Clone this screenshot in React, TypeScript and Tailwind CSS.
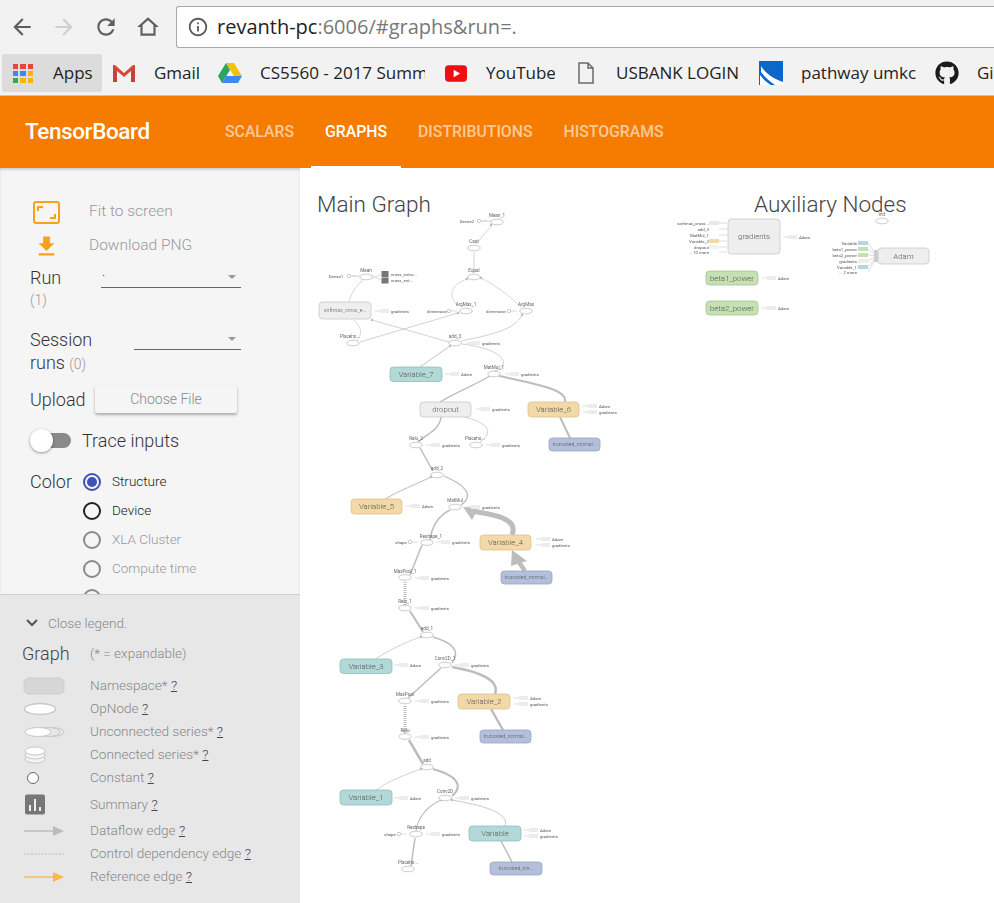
import React from "react";
import { FaGithub } from "react-icons/fa";

const rects: [string, number, number, number, number, string][] = [
  ["softmax_cross_e...", 319, 302, 52, 17, "g"],
  ["Variable_7", 390, 367, 52, 14.5, "t"],
  ["dropout", 420, 402, 51, 15, "g"],
  ["Variable_6", 528, 402, 51, 15, "o"],
  ["truncated_normal...", 549, 438, 51, 13, "b"],
  ["Variable_5", 351, 499, 51, 15, "o"],
  ["Variable_4", 480, 535, 51, 15, "o"],
  ["truncated_normal...", 501, 571, 51, 13, "b"],
  ["Variable_3", 340, 659, 52, 14.5, "t"],
  ["Variable_2", 458, 694, 52, 15, "o"],
  ["truncated_normal...", 480, 730, 51, 13, "b"],
  ["Variable_1", 340, 790, 52, 15, "t"],
  ["Variable", 469, 826, 52, 15, "t"],
  ["truncated_nor...", 490, 862, 52, 13, "b"],
  ["gradients", 728, 219, 52, 35, "g"],
  ["beta1_power", 706, 271, 52, 14, "n"],
  ["beta2_power", 706, 301, 52, 14, "n"],
  ["Adam", 878, 248, 51, 16, "g"],
];
const styles: Record<string, [string, string]> = {
  g: ["#eeeeee", "#c8c8c8"],
  t: ["#b2d8d8", "#93bcbc"],
  o: ["#f3d9a8", "#dcc08c"],
  b: ["#b4bfdb", "#95a3c4"],
  n: ["#c5e0b3", "#a3c48f"],
};
const ellipses: [string, number, number, number?][] = [
  ["Mean_1", 497, 222], ["Cast", 474, 248], ["Equal", 474, 277], ["Mean", 366, 277],
  ["ArgMax_1", 466, 311], ["ArgMax", 526, 311], ["Placeho...", 353, 343, 350], ["add_3", 455, 343],
  ["MatMul_1", 494, 374], ["Relu_2", 416, 445], ["Placeho...", 476, 445, 475], ["add_2", 437, 475],
  ["MatMul", 455, 507], ["Reshape_1", 427, 542.5, 431], ["MaxPool_1", 405, 577.5], ["Relu_1", 405, 608],
  ["add_1", 427, 635], ["Conv2D_1", 445, 665], ["MaxPool", 405, 701], ["Relu", 405, 736.5],
  ["add", 427, 767], ["Conv2D", 445, 798], ["Reshape", 416, 834], ["Placeho...", 408, 869],
  ["init", 882, 221],
];
const stubs: [number, number, string][] = [
  [380, 311, "gradients"], [471, 343, "gradients"], [450, 374, "Adam"], [510, 374, "gradients"],
  [481, 409, "gradients"], [588, 406, "Adam"], [588, 412, "gradients"], [431, 445, "gradients"],
  [491, 445, "gradients"], [411, 506, "Adam"], [471, 507, "gradients"], [441, 542, "gradients"],
  [541, 539, "Adam"], [541, 545, "gradients"], [420, 578, "gradients"], [420, 608, "gradients"],
  [399, 665, "Adam"], [460, 665, "gradients"], [519, 698, "Adam"], [519, 704, "gradients"],
  [420, 701, "gradients"], [420, 737, "gradients"], [399, 798, "Adam"], [460, 798, "gradients"],
  [431, 834, "gradients"], [529, 830, "Adam"], [529, 836, "gradients"], [788, 237, "Adam"],
  [767, 278, "Adam"], [767, 308, "Adam"],
];
const consts: [string, number, number, number][] = [
  ["Dense2", 467, 479, 221], ["Dense1", 336, 349, 276], ["dimension", 437, 449, 311], ["dimension", 496, 509, 311],
  ["shape", 401, 410, 542], ["shape", 390, 399, 834],
];
const edges: [string, number, string?][] = [
  ["M482 221L491 221", 0.6], ["M476 244L492 225", 0.6], ["M474 273L474 252", 0.7],
  ["M458 306C448 296 450 285 467 279", 0.6], ["M522 308C510 296 495 285 481 278", 0.6],
  ["M349 302C352 290 358 285 363 280", 0.6], ["M352 276L360 276", 0.6], ["M372 275L381 280", 0.5], ["M372 279L381 274", 0.5],
  ["M357 340C365 330 358 325 354 320", 0.6], ["M360 342L458 313", 0.7], ["M449 342L372 320", 0.7],
  ["M461 341C490 335 515 330 522 315", 0.7], ["M420 367L450 346", 0.9], ["M494 371C510 368 510 350 462 344", 0.7],
  ["M440 402C460 390 475 385 490 376", 1.3], ["M565 402C568 390 540 385 499 376", 2],
  ["M570 438L560 417", 2], ["M418 442C425 435 440 430 441 417", 1.5], ["M480 442C490 435 495 425 465 417", 0.7],
  ["M433 471L420 448", 1.5], ["M385 499C400 490 415 485 431 477", 1], ["M461 505C475 495 465 485 444 476", 1.3],
  ["M430 540C432 525 440 515 450 510", 1.4], ["M512 535C518 520 500 515 470 511", 5], ["M525 571L516 558", 4.5],
  ["M410 575L422 545", 1.5], ["M423 632L410 611", 2], ["M375 659C390 650 405 642 421 637", 0.7],
  ["M452 663C462 650 450 642 433 637", 1.6], ["M408 698L441 668", 1.5], ["M495 694C500 680 480 672 452 667", 2.5],
  ["M503 730L491 709", 2.5], ["M423 764L409 740", 2.5], ["M376 790C390 780 405 775 421 769", 0.7],
  ["M452 796C465 785 455 775 433 769", 2], ["M416 831C418 815 430 805 441 800", 1.1],
  ["M505 826C510 812 480 805 452 800", 0.8], ["M512 862L501 841", 1.5], ["M411 866L415 838", 1.5],
  ["M405 605L405 581", 3, "1 1"], ["M405 733L405 705", 3, "1 1"],
];
const heads: [number, number, number][] = [
  [491, 225, 2.5], [467, 279, 2.5], [481, 278, 2.5], [458, 313, 2.5], [522, 315, 2.5],
  [450, 346, 2.5], [431, 477, 2.5], [421, 637, 2.5], [421, 769, 2.5], [441, 800, 2.5], [452, 800, 2.5], [372, 320, 2.5],
];
const gradIn: [string, number, string][] = [
  ["softmax_cross...", 223, "#e8e8e8"], ["add_3", 229, "#fff"], ["MatMul_1", 235, "#fff"],
  ["Variable_2", 241, "#f3d9a8"], ["dropout", 247, "#eef3f3"], ["... 10 more", 252, "#fff"],
];
const adamIn: [string, number, string][] = [
  ["Variable", 243, "#b2d8d8"], ["beta1_power", 249, "#c5e0b3"], ["beta2_power", 255, "#c5e0b3"],
  ["gradients", 261, "#eeeeee"], ["Variable_1", 267, "#b2d8d8"], ["... 2 more", 272, "#fff"],
];

function Graph() {
  return (
    <svg className="absolute inset-0 w-[694px] h-[735px] blur-[0.3px]" viewBox="300 168 694 735" fontFamily="Roboto, sans-serif">
      <g fill="none" stroke="#bdbdbd">
        {edges.map(([d, w, dash], i) => (
          <path key={i} d={d} strokeWidth={w} strokeDasharray={dash} />
        ))}
      </g>
      {heads.map(([x, y, s], i) => (
        <circle key={i} cx={x} cy={y} r={s / 2} fill="#bdbdbd" />
      ))}
      <path d="M463 507L478 508L472 520Z M512 550L511 566L527 561Z" fill="#bdbdbd" />
      {rects.map(([t, x, y, w, h, c], i) => (
        <g key={i}>
          <rect x={x} y={y} width={w} height={h} rx={3.5} fill={styles[c][0]} stroke={styles[c][1]} strokeWidth={0.8} />
          <text
            x={x + w / 2}
            y={y + h / 2 + (t.length > 12 ? 1.8 : 2.6)}
            textAnchor="middle"
            fontSize={t.length > 12 ? 5.2 : 7.8}
            fontWeight={300}
            fill="#555"
          >
            {t}
          </text>
        </g>
      ))}
      {ellipses.map(([t, x, y, lx], i) => (
        <g key={i}>
          <ellipse cx={x} cy={y} rx={6.3} ry={2.8} fill="#fff" stroke="#aaa" strokeWidth={0.6} />
          <text x={lx ?? x} y={y - 5} textAnchor="middle" fontSize={4.6} fill="#666">
            {t}
          </text>
        </g>
      ))}
      {stubs.map(([x, y, t], i) => (
        <g key={i}>
          <path d={`M${x - 5} ${y}H${x}`} stroke="#bbb" strokeWidth={0.5} />
          <rect x={x} y={y - 2} width={9} height={4} fill="#ececec" />
          <text x={x + 11} y={y + 1.5} fontSize={4.3} fill="#555">
            {t}
          </text>
        </g>
      ))}
      {consts.map(([t, lx, cx, y], i) => (
        <g key={i}>
          <text x={lx} y={y + 1.5} textAnchor="middle" fontSize={4.3} fill="#555">
            {t}
          </text>
          <circle cx={cx} cy={y} r={1.7} fill="#fff" stroke="#999" strokeWidth={0.5} />
          <path d={`M${cx + 2} ${y}H${cx + 8}`} stroke="#bbb" strokeWidth={0.5} />
        </g>
      ))}
      <rect x={381.5} y={271} width={7} height={6} fill="#777" />
      <rect x={381.5} y={277.5} width={7} height={6} fill="#777" />
      <text x={391} y={275.5} fontSize={4.3} fill="#555">cross_entro...</text>
      <text x={391} y={281.5} fontSize={4.3} fill="#555">cross_ent...</text>
      {gradIn.map(([t, y, c], i) => (
        <g key={i}>
          <text x={709} y={y + 1.5} textAnchor="end" fontSize={4.3} fill="#555">{t}</text>
          <rect x={709} y={y - 2} width={10} height={4} fill={c} />
          <path d={`M719 ${y}L727 ${y}`} stroke="#bbb" strokeWidth={0.5} />
        </g>
      ))}
      {adamIn.map(([t, y, c], i) => (
        <g key={i}>
          <text x={857} y={y + 1.5} textAnchor="end" fontSize={4.3} fill="#555">{t}</text>
          <rect x={858} y={y - 2} width={10} height={4} fill={c} />
          <path d={`M868 ${y}L875 ${253 + i * 1.3}`} stroke="#bbb" strokeWidth={0.5} />
        </g>
      ))}
      <rect x={874} y={250} width={4} height={12} fill="#ccc" />
    </svg>
  );
}

function Nav({ d, c }: { d: string; c: string }) {
  return (
    <svg viewBox="0 0 24 24" className="w-[26px] h-[26px]" fill={c}>
      <path d={d} />
    </svg>
  );
}

function Bookmark({ icon, label, w }: { icon: React.ReactNode; label: string; w: string }) {
  return (
    <div className="flex items-center gap-[18px] shrink-0">
      <div className="w-6 h-6 flex items-center justify-center shrink-0">{icon}</div>
      <span className={`${w} overflow-hidden whitespace-nowrap`}>{label}</span>
    </div>
  );
}

function BrowserChrome() {
  const apps = ["#e8453c", "#e8453c", "#e8453c", "#4285f4", "#4285f4", "#f4b400", "#34a853", "#f4b400", "#f4b400"];
  return (
    <div className="bg-[#f2f2f2] h-[96px] border-b border-[#c4c4c4] overflow-hidden [font-family:'Open_Sans',sans-serif] text-[#222]">
      <div className="h-[48px] flex items-center pt-[6px]">
        <div className="w-[176px] flex items-center shrink-0 pl-[9px] gap-[16px]">
          <Nav c="#5f5f5f" d="M20 11H7.83l5.59-5.59L12 4l-8 8 8 8 1.41-1.41L7.83 13H20v-2z" />
          <Nav c="#cfcfcf" d="M12 4l-1.41 1.41L16.17 11H4v2h12.17l-5.58 5.59L12 20l8-8z" />
          <Nav c="#5f5f5f" d="M17.65 6.35C16.2 4.9 14.21 4 12 4c-4.42 0-7.99 3.58-7.99 8s3.57 8 7.99 8c3.73 0 6.84-2.55 7.73-6h-2.08c-.82 2.33-3.04 4-5.65 4-3.31 0-6-2.69-6-6s2.69-6 6-6c1.66 0 3.14.69 4.22 1.78L13 11h7V4l-2.35 2.35z" />
          <Nav c="#5f5f5f" d="M12 3L2 12h3v8h14v-8h3L12 3zm0 2.7l5 4.5V18H7v-7.8l5-4.5z" />
        </div>
        <div className="flex-1 h-[42px] bg-white border border-[#a8a8a8] border-r-0 rounded-l-[3px] flex items-center pl-[10px] gap-[8px] text-[20px]">
          <svg viewBox="0 0 24 24" className="w-[22px] h-[22px]" fill="#5a5a5a">
            <path d="M11 7h2v2h-2zm0 4h2v6h-2zm1-9C6.48 2 2 6.48 2 12s4.48 10 10 10 10-4.48 10-10S17.52 2 12 2zm0 18c-4.41 0-8-3.59-8-8s3.59-8 8-8 8 3.59 8 8-3.59 8-8 8z" />
          </svg>
          <span className="whitespace-nowrap">
            revanth-pc<span className="text-[#777]">:6006/#graphs&amp;run=.</span>
          </span>
        </div>
      </div>
      <div className="h-[47px] flex items-center pl-[2px] pt-[3px] text-[17px]">
        <div className="w-[100px] h-[38px] bg-[#dcdcdc] rounded-[2px] flex items-center gap-[20px] pl-[11px] mr-[10px] shrink-0">
          <div className="grid grid-cols-3 gap-[2px] w-[20px]">
            {apps.map((c, i) => (
              <div key={i} className="h-[5px]" style={{ backgroundColor: c }} />
            ))}
          </div>
          <span>Apps</span>
        </div>
        <div className="flex items-center gap-[19px]">
          <Bookmark
            label="Gmail"
            w="w-[45px]"
            icon={
              <svg viewBox="0 0 24 20" className="w-6 h-5">
                <path d="M1 2v17h4V8l7 6 7-6v11h4V2h-2l-9 8-9-8z" fill="#d9483b" />
                <path d="M5 8v11H1V3zM19 8v11h4V3z" fill="#c5443a" />
              </svg>
            }
          />
          <Bookmark
            label="CS5560 - 2017 Summ"
            w="w-[165px]"
            icon={
              <svg viewBox="0 0 24 22" className="w-6 h-[22px]">
                <path d="M8 1h8l8 13h-8z" fill="#f4c20d" />
                <path d="M8 1L0 14l4 7 8-13z" fill="#2da562" />
                <path d="M4 21h16l4-7H8z" fill="#4285f4" />
              </svg>
            }
          />
          <Bookmark
            label="YouTube"
            w="w-[69px]"
            icon={
              <svg viewBox="0 0 24 18" className="w-[22px] h-[17px]">
                <rect width="24" height="18" rx="4" fill="#ee0f10" />
                <path d="M9.5 5v8l7-4z" fill="#fff" />
              </svg>
            }
          />
          <Bookmark
            label="USBANK LOGIN"
            w="w-[124px]"
            icon={
              <svg viewBox="0 0 16 22" className="w-4 h-[22px]" fill="none" stroke="#6a6a6a" strokeWidth="1.5">
                <path d="M1 1h9l5 5v15H1zM10 1v5h5" />
              </svg>
            }
          />
          <Bookmark
            label="pathway umkc"
            w="w-[115px]"
            icon={
              <svg viewBox="0 0 24 24" className="w-6 h-6">
                <rect width="24" height="24" fill="#0b67c8" />
                <path d="M2 5C6 12 14 18 24 21V24H16C10 20 5 15 2 11Z M1 14C4 18 8 22 12 24H1Z" fill="#fff" />
              </svg>
            }
          />
          <Bookmark label="Gi" w="w-[18px]" icon={<FaGithub className="w-6 h-6 text-[#1b1b1b]" />} />
        </div>
      </div>
    </div>
  );
}

function Tab({ t, on }: { t: string; on?: boolean }) {
  return (
    <div
      className={`h-full px-[14px] pt-[2px] flex items-center border-b-2 ${
        on ? "border-white text-white" : "border-transparent text-white/60"
      }`}
    >
      {t}
    </div>
  );
}

function Radio({ t, ring, dot, text }: { t: string; ring: string; dot?: boolean; text: string }) {
  return (
    <div className="flex items-center gap-[11px] h-[29px]">
      <div className={`w-[18px] h-[18px] rounded-full border-2 ${ring} flex items-center justify-center bg-transparent`}>
        {dot && <div className="w-[10px] h-[10px] rounded-full bg-[#3f51b5]" />}
      </div>
      <span className={`text-[13.5px] font-light ${text}`}>{t}</span>
    </div>
  );
}

function Controls() {
  return (
    <div className="h-[426px] overflow-hidden pt-[31px] pl-[30px] pr-[59px] text-[#333] font-light">
      <div className="flex items-center h-[26px] ml-[3px]">
        <svg viewBox="0 0 27 23" className="w-[27px] h-[23px] shrink-0" fill="none" stroke="#f9a11b">
          <rect x="1" y="1" width="25" height="21" rx="2" strokeWidth="2" />
          <path d="M5 10V6h5M22 13v4h-5" strokeWidth="2" />
        </svg>
        <span className="ml-[29px] text-[15.5px] text-[#999]">Fit to screen</span>
      </div>
      <div className="flex items-center h-[26px] mt-[8px] ml-[3px]">
        <svg viewBox="0 0 24 24" className="w-[27px] h-[27px] shrink-0" fill="#f9a11b">
          <path d="M19 9h-4V3H9v6H5l7 7 7-7zM5 18v2h14v-2H5z" />
        </svg>
        <span className="ml-[29px] text-[15.5px] text-[#999]">Download PNG</span>
      </div>
      <div className="flex h-[68px]">
        <div className="w-[71px] shrink-0">
          <div className="text-[18px] leading-[25px] mt-[6px]">Run</div>
          <div className="text-[14px] text-[#999] leading-[20px]">(1)</div>
        </div>
        <div className="flex-1 relative h-[27px] mt-[2px] border-b border-[#666] text-[14px] pl-[1px]">
          .
          <span className="absolute right-[5px] top-[14px] w-0 h-0 border-x-[4px] border-x-transparent border-t-[4px] border-t-[#999]" />
        </div>
      </div>
      <div className="flex h-[46px]">
        <div className="w-[104px] shrink-0 text-[18px] leading-[23px] mt-[1px]">
          Session
          <br />
          runs <span className="text-[14px] text-[#999]">(0)</span>
        </div>
        <div className="flex-1 relative h-[23px] border-b border-[#666]">
          <span className="absolute right-[5px] top-[10px] w-0 h-0 border-x-[4px] border-x-transparent border-t-[4px] border-t-[#999]" />
        </div>
      </div>
      <div className="flex items-center h-[28px] mt-[12px]">
        <span className="w-[65px] shrink-0 text-[18px]">Upload</span>
        <div className="w-[142px] h-[28px] shrink-0 bg-[#f5f5f5] rounded-[2px] shadow-[0_2px_3px_rgba(0,0,0,0.3)] flex items-center justify-center text-[14px] text-[#888]">
          Choose File
        </div>
      </div>
      <div className="flex items-center h-[24px] mt-[15px]">
        <div className="relative w-[41px] h-[15px] shrink-0">
          <div className="absolute left-[3px] right-0 inset-y-0 rounded-full bg-[#8a8a8a]" />
          <div className="absolute left-0 top-[-4px] w-[23px] h-[23px] rounded-full bg-white shadow-[0_1px_3px_rgba(0,0,0,0.4)]" />
        </div>
        <span className="ml-[11px] text-[18px]">Trace inputs</span>
      </div>
      <div className="flex mt-[15px]">
        <span className="w-[53px] shrink-0 text-[18px] leading-[29px]">Color</span>
        <div>
          <Radio t="Structure" ring="border-[#3f51b5]" dot text="text-[#222]" />
          <Radio t="Device" ring="border-[#222]" text="text-[#222]" />
          <Radio t="XLA Cluster" ring="border-[#8a8a8a]" text="text-[#999]" />
          <Radio t="Compute time" ring="border-[#8a8a8a]" text="text-[#999]" />
          <Radio t="" ring="border-[#8a8a8a]" text="text-[#999]" />
        </div>
      </div>
    </div>
  );
}

function LegendRow({ icon, t, h }: { icon: React.ReactNode; t: string; h?: string }) {
  return (
    <div className={`flex items-center ${h ?? "h-[23px]"}`}>
      <div className="w-[68px] shrink-0 flex items-center">{icon}</div>
      <span>
        {t} <span className="underline text-[#445]">?</span>
      </span>
    </div>
  );
}

function Legend() {
  return (
    <div className="flex-1 bg-[#e7e7e7] border-t border-[#cfcfcf] pl-[22px] pt-[16px] text-[13.6px] text-[#888] font-light">
      <div className="flex items-center h-[24px] text-[13.5px] pl-[4px]">
        <svg viewBox="0 0 12 8" className="w-[12px] h-[8px]" fill="none" stroke="#555" strokeWidth="2">
          <path d="M1 1l5 5 5-5" />
        </svg>
        <span className="ml-[10px]">Close legend.</span>
      </div>
      <div className="flex items-center h-[26px] mt-[5px]">
        <span className="w-[68px] text-[18px] text-[#444]">Graph</span>
        <span className="text-[13.5px]">(* = expandable)</span>
      </div>
      <div className="mt-[8px]">
        <LegendRow
          t="Namespace*"
          icon={
            <svg width="44" height="18">
              <rect x="2" y="1" width="40" height="16" rx="5" fill="#d6d6d6" stroke="#cdcdcd" />
            </svg>
          }
        />
        <LegendRow
          t="OpNode"
          icon={
            <svg width="44" height="14">
              <ellipse cx="18" cy="7" rx="15.5" ry="5.5" fill="#fff" stroke="#c8c8c8" strokeWidth="1.5" />
            </svg>
          }
        />
        <LegendRow
          t="Unconnected series*"
          icon={
            <svg width="44" height="12">
              <ellipse cx="30" cy="6" rx="12" ry="4.5" fill="#e7e7e7" stroke="#c8c8c8" />
              <ellipse cx="26" cy="6" rx="12" ry="4.5" fill="#e7e7e7" stroke="#c8c8c8" />
              <ellipse cx="16" cy="6" rx="13" ry="4.5" fill="#fff" stroke="#c8c8c8" />
            </svg>
          }
        />
        <LegendRow
          t="Connected series*"
          icon={
            <svg width="44" height="18">
              <ellipse cx="13" cy="13" rx="10" ry="4" fill="#f4f4f4" stroke="#c8c8c8" />
              <ellipse cx="13" cy="9" rx="10" ry="4" fill="#f4f4f4" stroke="#c8c8c8" />
              <ellipse cx="13" cy="5" rx="10" ry="4" fill="#fff" stroke="#c8c8c8" />
            </svg>
          }
        />
        <LegendRow
          t="Constant"
          icon={
            <svg width="44" height="14">
              <circle cx="11" cy="7" r="5.5" fill="#fff" stroke="#666" />
            </svg>
          }
        />
        <LegendRow
          h="h-[30px]"
          t="Summary"
          icon={
            <svg width="44" height="21">
              <rect x="3" y="0.5" width="20" height="20" rx="2" fill="#777" />
              <path d="M7 11h2v6H7zM12 5h2v12h-2zM17 13h2v4h-2z" fill="#f0f0f0" />
            </svg>
          }
        />
        <LegendRow
          t="Dataflow edge"
          icon={
            <svg width="44" height="12">
              <path d="M2 6H32" stroke="#bbb" strokeWidth="1.4" />
              <path d="M31 1l11 5-11 5z" fill="#bbb" />
            </svg>
          }
        />
        <LegendRow
          t="Control dependency edge"
          icon={
            <svg width="44" height="12">
              <path d="M2 6H42" stroke="#bbb" strokeWidth="1" strokeDasharray="2 1.5" />
            </svg>
          }
        />
        <LegendRow
          t="Reference edge"
          icon={
            <svg width="44" height="12">
              <path d="M2 6H32" stroke="#ffb74d" strokeWidth="1.4" />
              <path d="M31 1l11 5-11 5z" fill="#ffb74d" />
            </svg>
          }
        />
      </div>
    </div>
  );
}

export default function App() {
  return (
    <div className="h-[903px] w-full overflow-hidden flex flex-col bg-white [font-family:Roboto,sans-serif]">
      <BrowserChrome />
      <header className="h-[72px] shrink-0 bg-[#f57c00] flex items-center pl-[25px] text-[15.8px] font-medium">
        <div className="w-[186px] text-[22.5px] tracking-[-0.4px] text-white">TensorBoard</div>
        <div className="flex h-full gap-[3px]">
          <Tab t="SCALARS" />
          <Tab t="GRAPHS" on />
          <Tab t="DISTRIBUTIONS" />
          <Tab t="HISTOGRAMS" />
        </div>
      </header>
      <div className="flex-1 flex min-h-0">
        <aside className="w-[300px] shrink-0 flex flex-col bg-[#f5f5f5] shadow-[0_2px_2px_rgba(0,0,0,0.15)_inset]">
          <Controls />
          <Legend />
        </aside>
        <main className="relative flex-1 overflow-hidden">
          <div className="flex pt-[21px] pl-[17px] text-[22.5px] leading-[30px] font-light text-[#444]">
            <div className="w-[437px]">Main Graph</div>
            <div>Auxiliary Nodes</div>
          </div>
          <Graph />
        </main>
      </div>
    </div>
  );
}
